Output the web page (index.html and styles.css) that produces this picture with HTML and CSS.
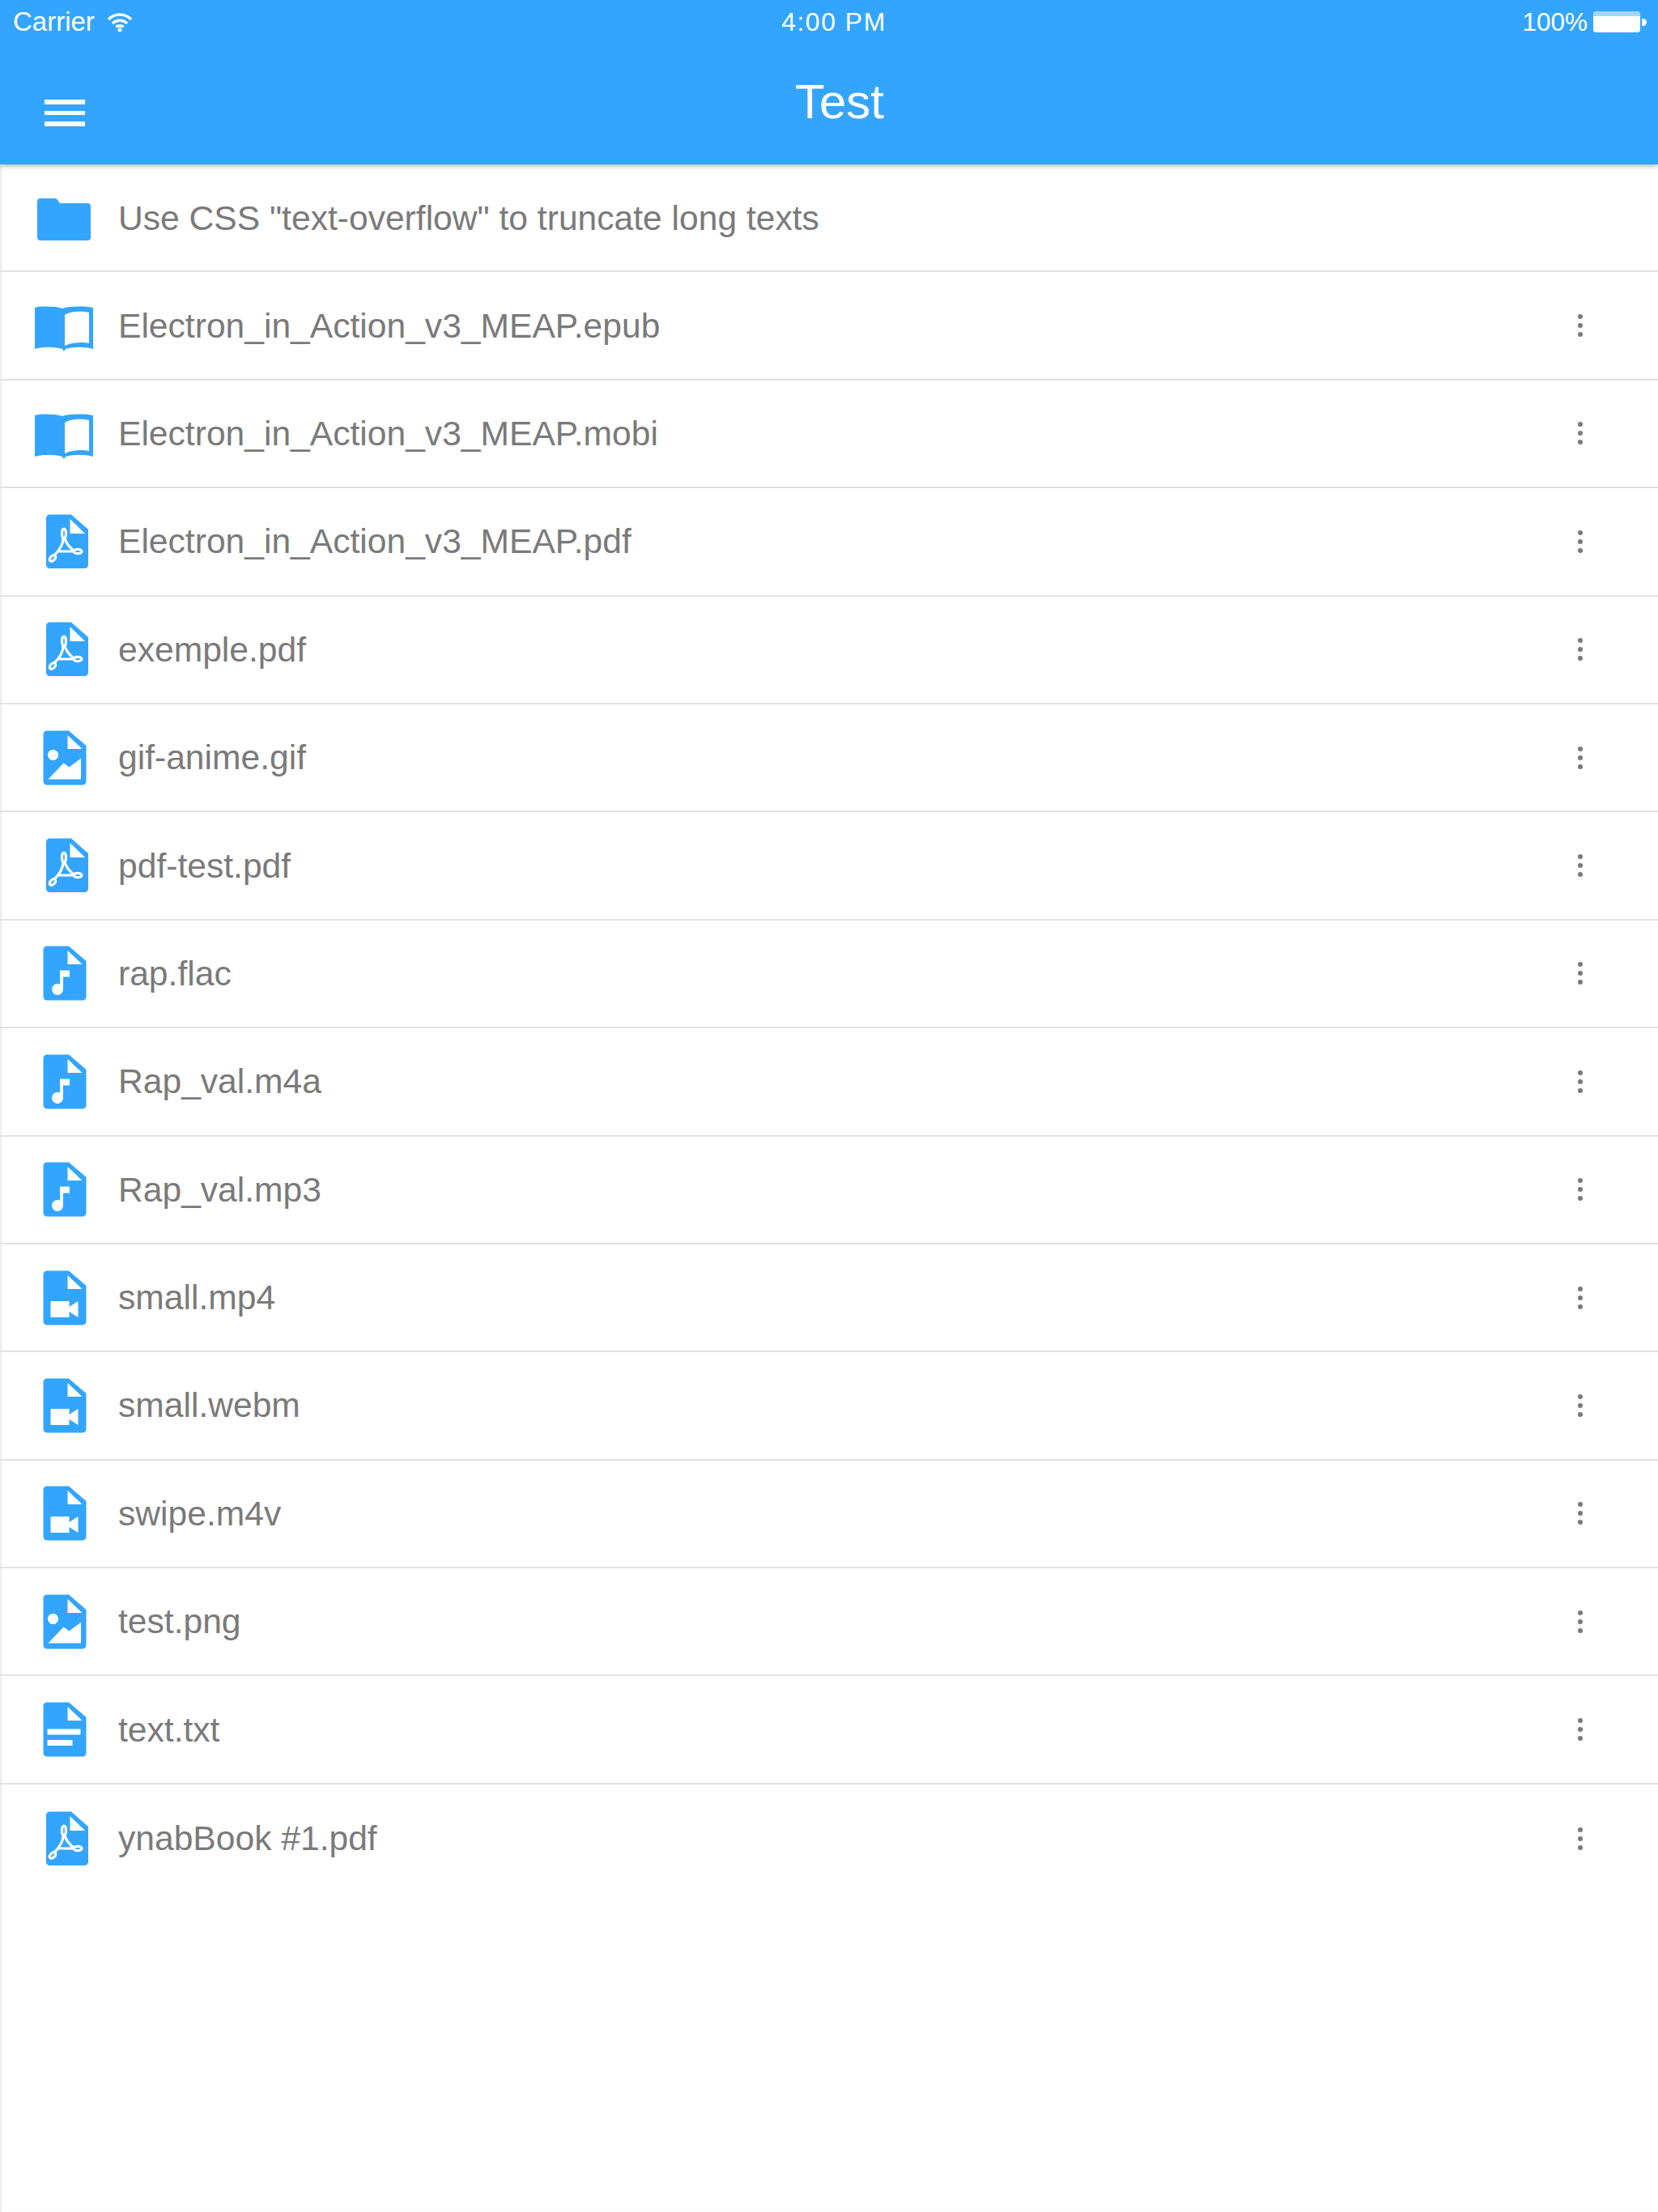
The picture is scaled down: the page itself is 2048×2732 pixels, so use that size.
FILE: index.html
```html
<!DOCTYPE html>
<html lang="en">
<head>
    <meta charset="UTF-8">
    <meta name="viewport" content="width=device-width, initial-scale=1.0">
    <title>Test</title>
    <link rel="stylesheet" href="styles.css">
</head>
<body>
    <!-- shared icons, 74x74 box -->
    <svg class="icon-defs" width="0" height="0">
        <symbol id="i-folder" viewBox="0 0 74 74">
            <path d="M3 16 a4 4 0 0 1 4-4 H25 a5 5 0 0 1 4 3 l1 2 a3 3 0 0 0 3 1 H65 a4 4 0 0 1 4 4 V60 a4 4 0 0 1-4 4 H7 a4 4 0 0 1-4-4 Z"/>
        </symbol>
        <symbol id="i-book" viewBox="0 0 74 74">
            <path fill-rule="evenodd" d="M0 15 C8 13 24 13 34 16 C44 13 60 13 72 15 V66 C62 63 48 63 38 66 L36 69 L34 66 C24 63 10 63 0 66 Z M37 24 V62 C45 58 58 57 67 59 V21 C58 19 44 19 37 24 Z"/>
        </symbol>
        <symbol id="i-pdf" viewBox="0 0 74 74">
            <path fill-rule="evenodd" d="M18.500 3.500 H45 L66 22 V65.500 a4.500 4.500 0 0 1-4.500 4.500 H18.500 a4.500 4.500 0 0 1-4.500-4.500 V8 a4.500 4.500 0 0 1 4.500-4.500 Z M43.500 9 V27 H62 Z"/>
            <ellipse class="cut" cx="36" cy="27" rx="2.500" ry="6"/>
            <ellipse class="cut" cx="22" cy="57.500" rx="2.800" ry="4.500" transform="rotate(45 22 57.500)"/>
            <ellipse class="cut" cx="53" cy="49" rx="5" ry="2.600"/>
            <path class="cut" d="M35 33 C35 40 30 48 24 54 M37 33 C39 40 43 44 48 48 M29 49 H48"/>
        </symbol>
        <symbol id="i-image" viewBox="0 0 74 74">
            <path fill-rule="evenodd" d="M15 3.500 H42 L63.500 22 V66 a4.500 4.500 0 0 1-4.500 4.500 H15 a4.500 4.500 0 0 1-4.500-4.500 V8 a4.500 4.500 0 0 1 4.500-4.500 Z M40.500 9 V26 H58.500 Z M22.500 27 a6.500 6.500 0 1 0 .01 0 Z M16.500 63.500 H57 V37.500 L42.500 48.500 L35.500 43.500 Z"/>
        </symbol>
        <symbol id="i-music" viewBox="0 0 74 74">
            <path fill-rule="evenodd" d="M15 3.500 H42 L63.500 22 V66 a4.500 4.500 0 0 1-4.500 4.500 H15 a4.500 4.500 0 0 1-4.500-4.500 V8 a4.500 4.500 0 0 1 4.500-4.500 Z M40.500 9 V26 H58.500 Z M31 33.500 V50.700 a7 7 0 1 0 4 6.300 V41.500 H43 V33.500 Z"/>
        </symbol>
        <symbol id="i-video" viewBox="0 0 74 74">
            <path fill-rule="evenodd" d="M15 3.500 H42 L63.500 22 V66 a4.500 4.500 0 0 1-4.500 4.500 H15 a4.500 4.500 0 0 1-4.500-4.500 V8 a4.500 4.500 0 0 1 4.500-4.500 Z M40.500 9 V26 H58.500 Z M19.500 41 V61 H42.500 V54 L53.500 61 V41 L42.500 48 V41 Z"/>
        </symbol>
        <symbol id="i-text" viewBox="0 0 74 74">
            <path fill-rule="evenodd" d="M15 3.500 H42 L63.500 22 V66 a4.500 4.500 0 0 1-4.500 4.500 H15 a4.500 4.500 0 0 1-4.500-4.500 V8 a4.500 4.500 0 0 1 4.500-4.500 Z M40.500 9 V26 H58.500 Z M15.500 36.500 V43.500 H56.500 V36.500 Z M15.500 50 V57 H46.500 V50 Z"/>
        </symbol>
        <symbol id="i-more" viewBox="0 0 8 36">
            <circle cx="4" cy="7" r="3"/>
            <circle cx="4" cy="18" r="3"/>
            <circle cx="4" cy="29" r="3"/>
        </symbol>
    </svg>

    <header class="app-header">
        <div class="status-bar">
            <div class="status-left">
                <span class="carrier">Carrier</span>
                <svg class="wifi" viewBox="0 0 32 25" width="32" height="25">
                    <path d="M2 9 C10 1 22 1 30 9" />
                    <path d="M7 14 C12 9 20 9 25 14" />
                    <path d="M11.500 18.500 C14 16 18 16 20.500 18.500" />
                    <circle cx="16" cy="22" r="2.500" />
                </svg>
            </div>
            <div class="status-time">4:00 PM</div>
            <div class="status-right">
                <span>100%</span>
                <span class="battery"><span class="battery-tip"></span></span>
            </div>
        </div>
        <div class="nav-bar">
            <div class="menu-btn"><i></i><i></i><i></i></div>
            <h1>Test</h1>
        </div>
    </header>

    <ul class="file-list">
        <li class="file-row">
            <svg class="file-icon"><use href="#i-folder"/></svg>
            <span class="file-name">Use CSS "text-overflow" to truncate long texts</span>
        </li>
        <li class="file-row">
            <svg class="file-icon"><use href="#i-book"/></svg>
            <span class="file-name">Electron_in_Action_v3_MEAP.epub</span>
            <svg class="more"><use href="#i-more"/></svg>
        </li>
        <li class="file-row">
            <svg class="file-icon"><use href="#i-book"/></svg>
            <span class="file-name">Electron_in_Action_v3_MEAP.mobi</span>
            <svg class="more"><use href="#i-more"/></svg>
        </li>
        <li class="file-row">
            <svg class="file-icon"><use href="#i-pdf"/></svg>
            <span class="file-name">Electron_in_Action_v3_MEAP.pdf</span>
            <svg class="more"><use href="#i-more"/></svg>
        </li>
        <li class="file-row">
            <svg class="file-icon"><use href="#i-pdf"/></svg>
            <span class="file-name">exemple.pdf</span>
            <svg class="more"><use href="#i-more"/></svg>
        </li>
        <li class="file-row">
            <svg class="file-icon"><use href="#i-image"/></svg>
            <span class="file-name">gif-anime.gif</span>
            <svg class="more"><use href="#i-more"/></svg>
        </li>
        <li class="file-row">
            <svg class="file-icon"><use href="#i-pdf"/></svg>
            <span class="file-name">pdf-test.pdf</span>
            <svg class="more"><use href="#i-more"/></svg>
        </li>
        <li class="file-row">
            <svg class="file-icon"><use href="#i-music"/></svg>
            <span class="file-name">rap.flac</span>
            <svg class="more"><use href="#i-more"/></svg>
        </li>
        <li class="file-row">
            <svg class="file-icon"><use href="#i-music"/></svg>
            <span class="file-name">Rap_val.m4a</span>
            <svg class="more"><use href="#i-more"/></svg>
        </li>
        <li class="file-row">
            <svg class="file-icon"><use href="#i-music"/></svg>
            <span class="file-name">Rap_val.mp3</span>
            <svg class="more"><use href="#i-more"/></svg>
        </li>
        <li class="file-row">
            <svg class="file-icon"><use href="#i-video"/></svg>
            <span class="file-name">small.mp4</span>
            <svg class="more"><use href="#i-more"/></svg>
        </li>
        <li class="file-row">
            <svg class="file-icon"><use href="#i-video"/></svg>
            <span class="file-name">small.webm</span>
            <svg class="more"><use href="#i-more"/></svg>
        </li>
        <li class="file-row">
            <svg class="file-icon"><use href="#i-video"/></svg>
            <span class="file-name">swipe.m4v</span>
            <svg class="more"><use href="#i-more"/></svg>
        </li>
        <li class="file-row">
            <svg class="file-icon"><use href="#i-image"/></svg>
            <span class="file-name">test.png</span>
            <svg class="more"><use href="#i-more"/></svg>
        </li>
        <li class="file-row">
            <svg class="file-icon"><use href="#i-text"/></svg>
            <span class="file-name">text.txt</span>
            <svg class="more"><use href="#i-more"/></svg>
        </li>
        <li class="file-row">
            <svg class="file-icon"><use href="#i-pdf"/></svg>
            <span class="file-name">ynabBook #1.pdf</span>
            <svg class="more"><use href="#i-more"/></svg>
        </li>
    </ul>
</body>
</html>
```

FILE: styles.css
```css
* {
    box-sizing: border-box;
}

body {
    margin: 0;
    height: 2732px;
    overflow: hidden;
    background: #fff;
    font-family: "Liberation Sans", Arial, sans-serif;
    color: #7a7a7a;
}

.icon-defs {
    position: absolute;
}

.app-header {
    position: relative;
    height: 203px;
    background: #33a5ff;
    color: #fff;
    box-shadow: 0 2px 6px rgba(0,0,0,0.3);
}

.status-bar {
    display: grid;
    grid-template-columns: 1fr auto 1fr;
    align-items: center;
    height: 54px;
    padding: 0 14px 0 16px;
    font-size: 31.500px;
}

.status-left {
    display: flex;
    align-items: center;
    gap: 15px;
}

.carrier {
    font-size: 33px;
}

.wifi {
    fill: #fff;
    stroke: none;
}

.wifi path {
    fill: none;
    stroke: #fff;
    stroke-width: 3.500;
}

.status-time {
    font-size: 32px;
    letter-spacing: 1.500px;
    margin-left: 10px;
}

.status-right {
    display: flex;
    align-items: center;
    justify-content: flex-end;
    gap: 7px;
}

.battery {
    position: relative;
    width: 58px;
    height: 26px;
    margin-right: 8px;
    background: #fff;
    background-clip: padding-box;
    border-radius: 3px;
    border-top: 6px solid rgba(255,255,255,0.55);
}

.battery-tip {
    position: absolute;
    right: -8px;
    top: 3px;
    width: 6px;
    height: 9px;
    background: #fff;
    border-radius: 0 5px 5px 0;
}

.nav-bar {
    display: flex;
    align-items: flex-start;
    padding-left: 55px;
}

.menu-btn {
    display: flex;
    flex-direction: column;
    gap: 8px;
    width: 50px;
    margin-top: 69px;
}

.menu-btn i {
    display: block;
    height: 5.500px;
    background: #fff;
}

.nav-bar h1 {
    flex: 1;
    margin: 39px 0 0;
    padding-right: 79px;
    text-align: center;
    font-size: 60px;
    font-weight: normal;
    line-height: 66px;
}

.file-list {
    list-style: none;
    margin: 0;
    padding: 0;
    box-shadow: inset 2px 0 2px rgba(0,0,0,0.08);
    height: 2529px;
}

.file-row {
    display: flex;
    align-items: center;
    height: 133.400px;
    padding: 0 92px 0 43px;
    border-bottom: 2.500px solid #e2e2e2;
}

.file-row:first-child {
    padding-top: 2px;
}

.file-row:last-child {
    border-bottom: none;
}

.file-icon {
    flex: none;
    width: 74px;
    height: 74px;
    margin-right: 29px;
    fill: #33a5ff;
}

.cut {
    fill: none;
    stroke: #fff;
    stroke-width: 3.200;
}

.file-name {
    flex: 1;
    font-size: 42.600px;
    white-space: nowrap;
    overflow: hidden;
    text-overflow: ellipsis;
}

.more {
    flex: none;
    width: 8px;
    height: 36px;
    fill: #7a7a7a;
}
```
